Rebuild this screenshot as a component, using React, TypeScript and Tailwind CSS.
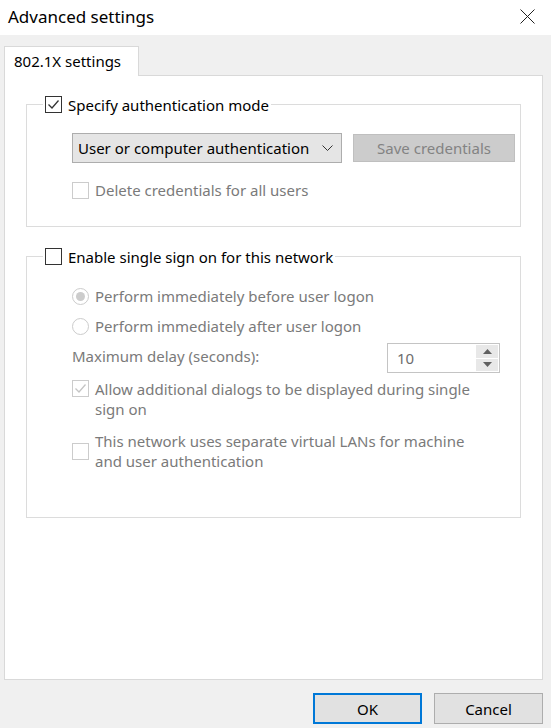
type BoxProps = { checked?: boolean; disabled?: boolean };

const CheckBox: React.FC<BoxProps> = ({ checked, disabled }) => (
	<span
		className={`flex h-[17px] w-[17px] shrink-0 items-center justify-center border bg-white ${
			disabled ? "border-[#cccccc]" : "border-[#333333]"
		}`}
	>
		{checked && (
			<svg width="13" height="13" viewBox="0 0 13 13">
				<path
					d="M1.5 6.5 L5 10 L11.5 2.5"
					fill="none"
					stroke={disabled ? "#c4c4c4" : "#333333"}
					strokeWidth="1.3"
				/>
			</svg>
		)}
	</span>
);

const Radio: React.FC<BoxProps> = ({ checked }) => (
	<span className="flex h-[17px] w-[17px] shrink-0 items-center justify-center rounded-full border border-[#cccccc] bg-white">
		{checked && <span className="h-[9px] w-[9px] rounded-full bg-[#cccccc]" />}
	</span>
);

const AdvancedSettings: React.FC = () => {
	return (
		<div className="flex h-[728px] w-[551px] flex-col bg-[#f0f0f0] font-['Noto_Sans',sans-serif] text-[15px] leading-[20px] text-black">
			{/* title bar */}
			<div className="flex h-[35px] shrink-0 items-center justify-between bg-white pb-[2px] pl-[8px] pr-[16px]">
				<span className="text-[17px]">Advanced settings</span>
				<svg width="15" height="15" viewBox="0 0 15 15">
					<path d="M0.5 0.5 L14.5 14.5 M14.5 0.5 L0.5 14.5" stroke="#222" strokeWidth="1" />
				</svg>
			</div>

			<div className="flex flex-col px-[4px] pt-[11px]">
				<div className="relative z-10 -mb-px flex h-[30px] w-[135px] items-center border border-b-0 border-[#d9d9d9] bg-white pb-[2px] pl-[9px]">
					802.1X settings
				</div>

				<div className="h-[605px] w-[539px] border border-[#d9d9d9] bg-white px-[21px] pt-[20px]">
					<fieldset className="h-[131px] border border-[#dcdcdc]">
						<legend className="ml-[16px] flex h-[17px] items-center gap-[6px] px-[2px]">
							<CheckBox checked />
							<span>Specify authentication mode</span>
						</legend>
						<div className="pl-[45px] pt-[20px]">
							<div className="flex items-center gap-[11px]">
								<div className="flex h-[30px] w-[270px] items-center justify-between border border-[#adadad] bg-[#e5e5e5] pl-[5px] pr-[8px]">
									<span>User or computer authentication</span>
									<svg width="11" height="7" viewBox="0 0 11 7">
										<path d="M0.5 0.5 L5.5 5.5 L10.5 0.5" fill="none" stroke="#333" strokeWidth="1" />
									</svg>
								</div>
								<div className="flex h-[28px] w-[162px] items-center justify-center border border-[#bfbfbf] bg-[#cccccc] text-[#838383]">
									Save credentials
								</div>
							</div>
							<div className="mt-[17px] flex items-center gap-[6px] text-[#7a7a7a]">
								<CheckBox disabled />
								<span>Delete credentials for all users</span>
							</div>
						</div>
					</fieldset>

					<fieldset className="mt-[21px] h-[270px] border border-[#dcdcdc]">
						<legend className="ml-[16px] flex h-[17px] items-center gap-[6px] px-[2px]">
							<CheckBox />
							<span>Enable single sign on for this network</span>
						</legend>
						<div className="flex flex-col pl-[45px] pr-[20px] pt-[21px] text-[#7a7a7a]">
							<div className="flex h-[20px] items-center gap-[6px]">
								<Radio checked />
								<span>Perform immediately before user logon</span>
							</div>
							<div className="mt-[10px] flex h-[20px] items-center gap-[6px]">
								<Radio />
								<span>Perform immediately after user logon</span>
							</div>
							<div className="mt-[7px] flex items-center justify-between">
								<span className="-mt-[5px]">Maximum delay (seconds):</span>
								<div className="flex h-[30px] w-[113px] border border-[#c4c4c4] bg-white">
									<span className="flex-1 pl-[9px] pt-[4px] text-[#6d6d6d]">10</span>
									<div className="flex w-[24px] flex-col gap-px p-px">
										<span className="flex flex-1 items-center justify-center bg-[#e8e8e8]">
											<svg width="9" height="5" viewBox="0 0 9 5">
												<path d="M0 5 L4.5 0 L9 5 Z" fill="#606060" />
											</svg>
										</span>
										<span className="flex flex-1 items-center justify-center bg-[#e8e8e8]">
											<svg width="9" height="5" viewBox="0 0 9 5">
												<path d="M0 0 L4.5 5 L9 0 Z" fill="#606060" />
											</svg>
										</span>
									</div>
								</div>
							</div>
							<div className="mt-[6px] flex items-start gap-[6px]">
								<span className="mt-px">
									<CheckBox checked disabled />
								</span>
								<span>
									Allow additional dialogs to be displayed during single
									<br />
									sign on
								</span>
							</div>
							<div className="mt-[12px] flex items-center gap-[6px]">
								<CheckBox disabled />
								<span>
									This network uses separate virtual LANs for machine
									<br />
									and user authentication
								</span>
							</div>
						</div>
					</fieldset>
				</div>
			</div>

			<div className="mt-[13px] flex justify-end gap-[12px] pr-[8px]">
				<button className="h-[31px] w-[109px] border-2 border-[#0078d7] bg-[#e1e1e1]">OK</button>
				<button className="h-[31px] w-[109px] border border-[#adadad] bg-[#e1e1e1]">Cancel</button>
			</div>
		</div>
	);
};

export default function App() {
	return <AdvancedSettings />;
}
